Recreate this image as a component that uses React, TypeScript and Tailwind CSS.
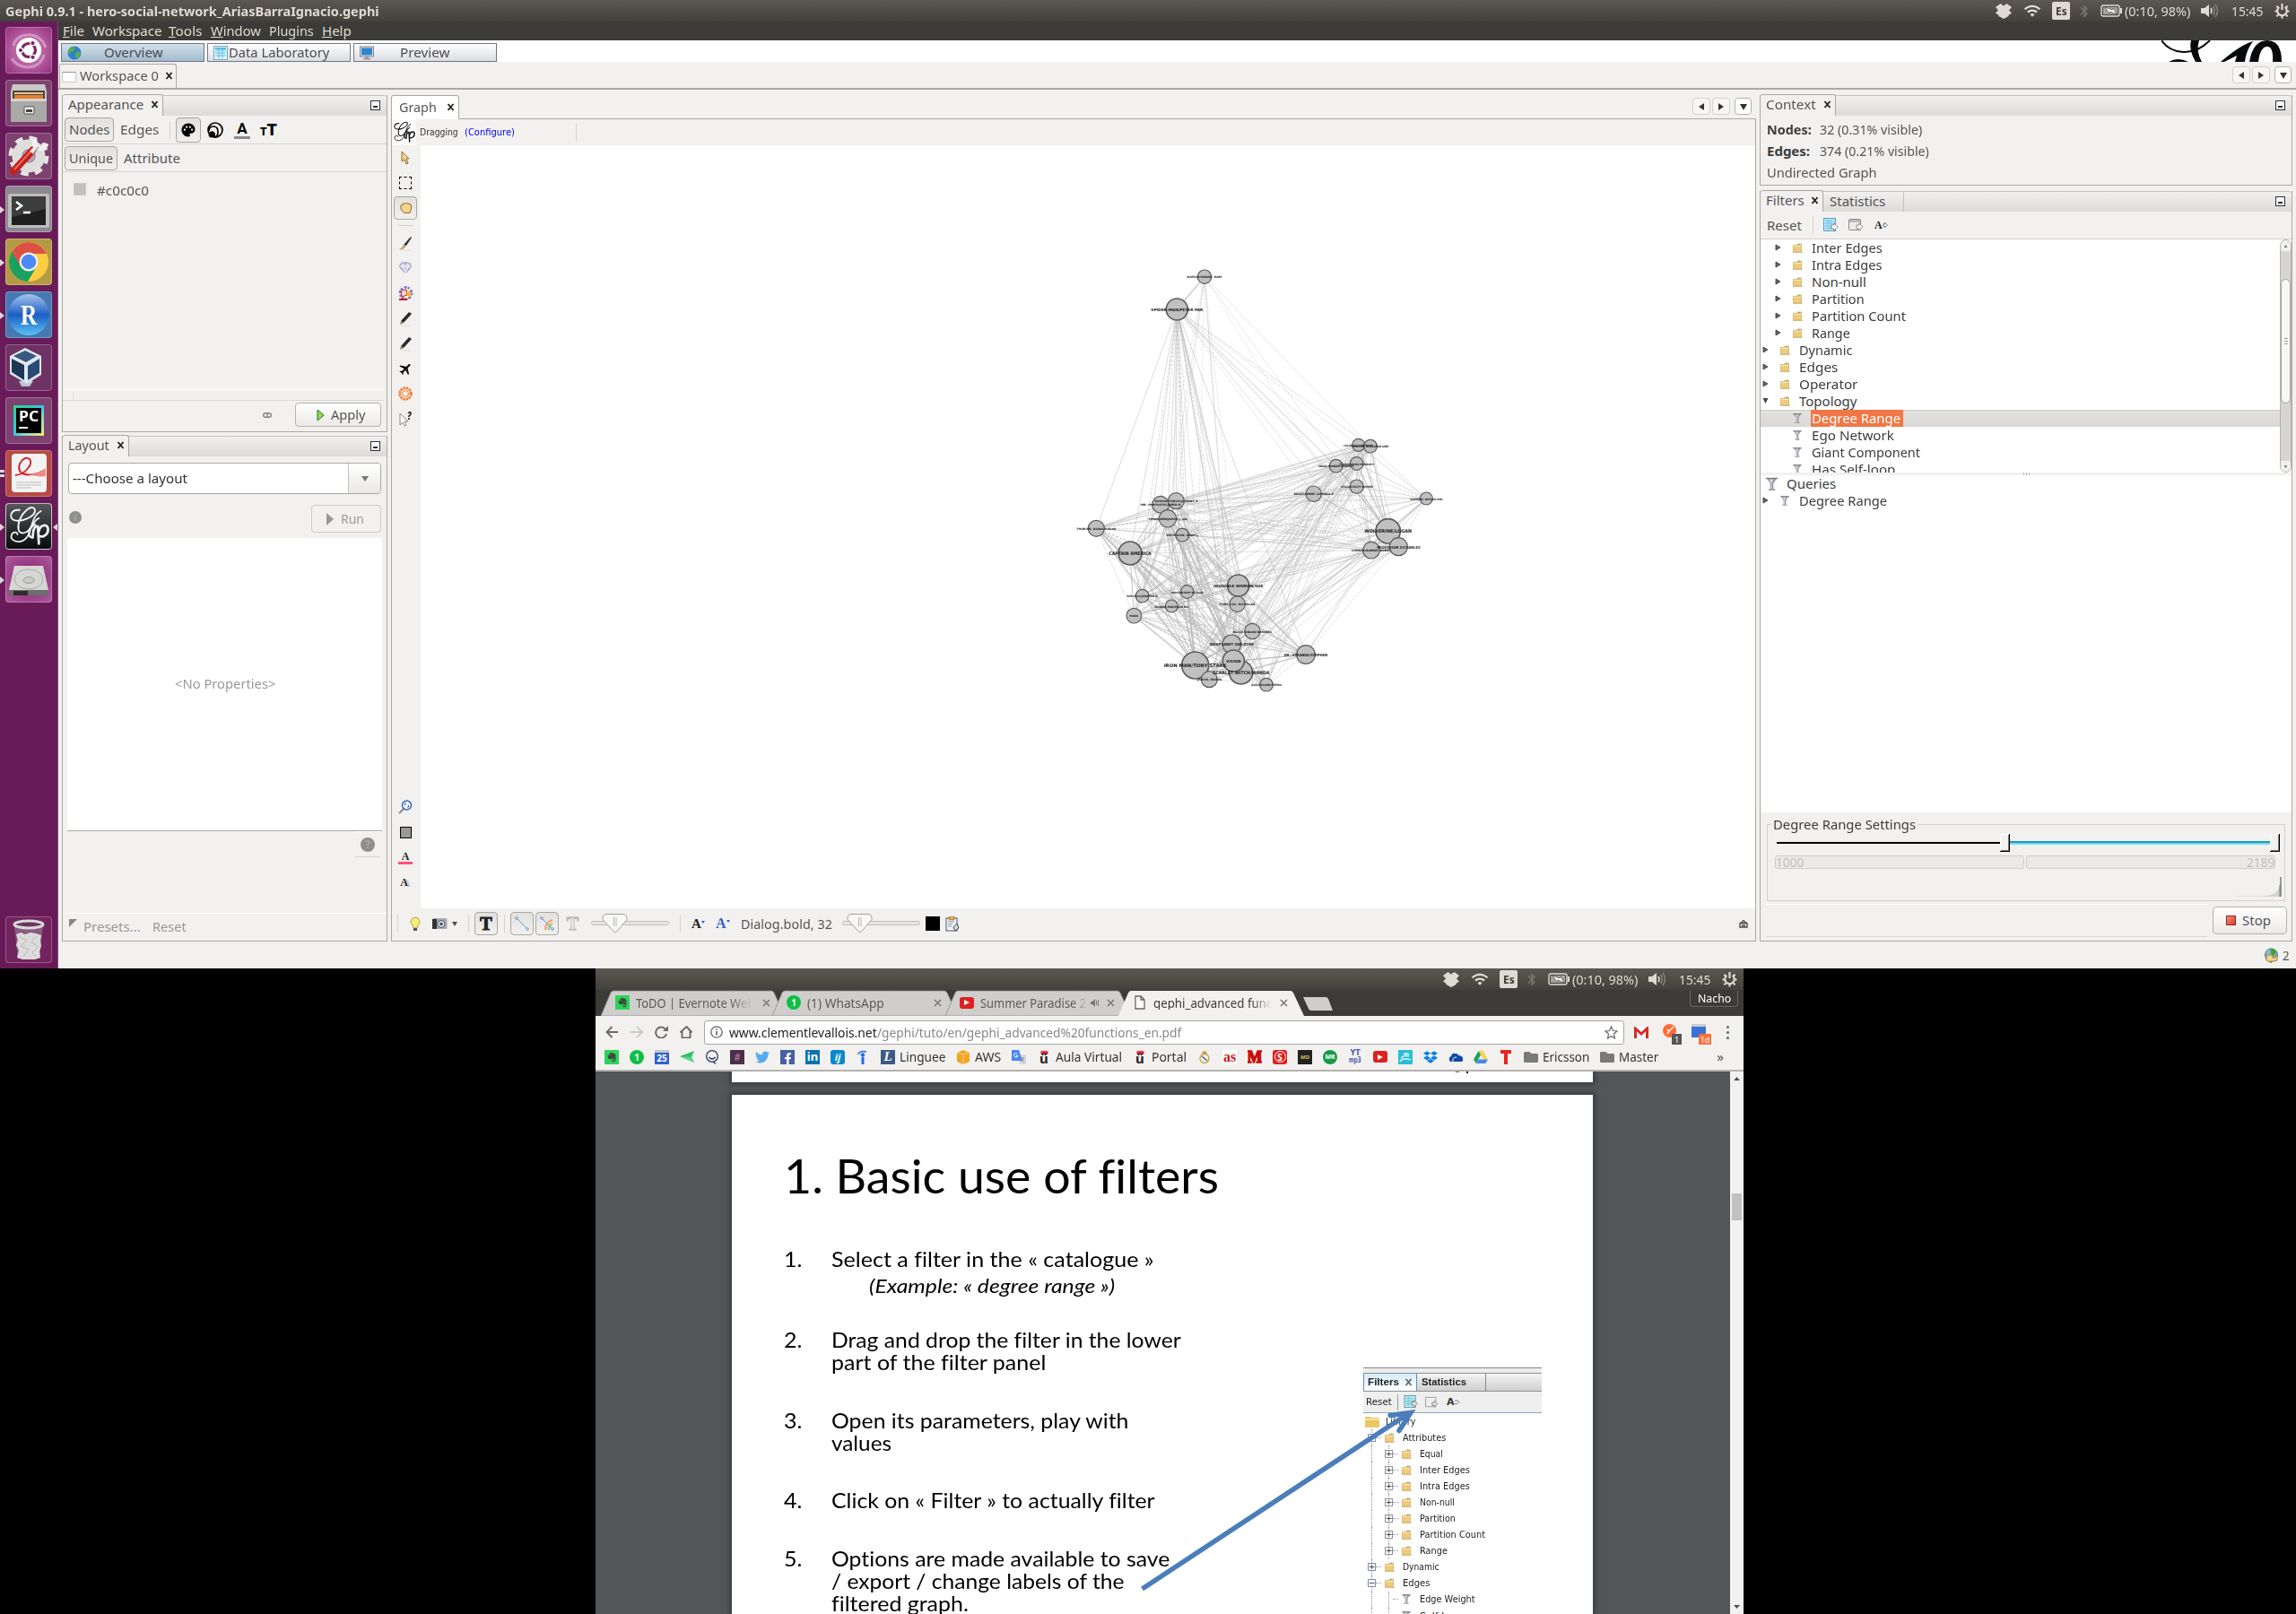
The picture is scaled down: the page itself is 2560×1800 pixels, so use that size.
import React, { useLayoutEffect, useRef, useState } from "react";
import { MdWifi, MdBluetooth, MdPalette, MdFlight } from "react-icons/md";
import { FaDropbox, FaTwitter, FaFacebookF, FaEvernote, FaFolder } from "react-icons/fa";

/* Text run condensed or stretched to a known advance width. */
function F({ w, children, className = "" }: { w: number; children: React.ReactNode; className?: string }) {
  const ref = useRef<HTMLSpanElement>(null);
  const [k, setK] = useState(1);
  useLayoutEffect(() => {
    if (ref.current) setK(w / ref.current.offsetWidth);
  }, [w]);
  return (
    <span className={"inline-block shrink-0 whitespace-pre " + className} style={{ width: w }}>
      <span ref={ref} className="inline-block origin-left whitespace-pre" style={{ transform: `scaleX(${k})` }}>
        {children}
      </span>
    </span>
  );
}

function PowerGear() {
  return (
    <svg className="h-[18px] w-[17px]" viewBox="0 0 17 18" fill="none" stroke="#dfdbd2">
      <path d="M5.300 4.800A5.300 5.300 0 1 0 11.700 4.800" strokeWidth="2.200" />
      <path d="M8.500 1V8" strokeWidth="2.200" />
      <path d="M2.300 3.800l1.800 1.700M14.700 3.800l-1.800 1.700M.5 9.500H3M14 9.500h2.500M2.300 15.200l1.900-1.800M14.700 15.200l-1.900-1.800M8.500 15v2.600" strokeWidth="2" />
    </svg>
  );
}

function Indicators() {
  return (
    <div className="flex h-6 items-center pr-[7px] text-[15px] text-[#dfdbd2]">
      <svg className="h-[18px] w-[18px]" viewBox="0 0 18 18" fill="#dfdbd2"><path d="M5.500 1L9 3.500 12.500 1 18 5l-3 3.500 3 3-3.500 2.500v1L9 18l-5.500-3v-1L0 11.500l3-3L0 5z" /></svg>
      <MdWifi className="ml-[13px] h-[20px] w-5" />
      <div className="ml-3 flex h-5 w-5 items-center justify-center rounded-[2px] bg-[#dfdbd2] text-[13px] font-bold text-[#3c3b37]">
        <F w={13}>Es</F>
      </div>
      <MdBluetooth className="ml-[8px] h-[17px] w-4 text-[#7b7973]" />
      <svg className="ml-[10px] h-[14px] w-6" viewBox="0 0 24 14">
        <rect x="1" y="1" width="20" height="12" rx="2" fill="none" stroke="#dfdbd2" strokeWidth="1.400" />
        <rect x="3" y="3" width="16" height="8" fill="#a5a29a" />
        <rect x="22" y="4" width="2" height="6" fill="#dfdbd2" />
        <path d="M5 3l8 3 1-2 4 7-7-3-1 2z" fill="#fff" stroke="#4a4944" strokeWidth=".7" />
      </svg>
      <F w={73} className="ml-[3px]">(0:10, 98%)</F>
      <svg className="ml-[12px] h-4 w-5" viewBox="0 0 20 16" fill="none">
        <path d="M0 5h4l5-4v14l-5-4H0z" fill="#dfdbd2" />
        <path d="M11 5q2 3 0 6" stroke="#dfdbd2" strokeWidth="1.600" />
        <path d="M13.500 3q3.500 5 0 10M16 1q5 7 0 14" stroke="#85827b" strokeWidth="1.500" />
      </svg>
      <F w={35} className="ml-[14px]">15:45</F>
      <div className="ml-[13px]"><PowerGear /></div>
    </div>
  );
}

function GephiMark({ color }: { color: string }) {
  return (
    <svg viewBox="0 0 44 44" className="h-full w-full" fill="none" stroke={color} strokeLinecap="round">
      <path d="M13 6C4 5 2 14 8 16c7 2 18-3 20-8 1-5-4-6-8-2-6 5-9 13-8 19 1 5 8 5 12-2 3-5 5-8 8-9" strokeWidth="1.700" />
      <path d="M34 7c-6 3-8 10-10 17-2 8-6 13-12 13-5 0-8-3-7-6 1-4 6-4 6-1" strokeWidth="1.500" />
      <path d="M25 33c-4-1-4-9 3-13" strokeWidth="2" />
      <path d="M26 33c0-8 2-12 5-11l1 17" strokeWidth="2.400" />
      <path d="M32 27c1-7 9-8 9-2 0 5-5 9-9 6" strokeWidth="2.400" />
    </svg>
  );
}

const tileBase = "relative flex h-[52px] w-[52px] items-center justify-center rounded-[4px] border border-white/25";
function Tile({ bg, children, left, right }: { bg: string; children: React.ReactNode; left?: number; right?: boolean }) {
  return (
    <div className={tileBase + " " + bg}>
      {left === 1 && <span className="absolute top-[22px] -left-[7px] h-0 w-0 border-y-[4px] border-l-[5px] border-y-transparent border-l-[#dcd6da]" />}
      {left === 2 && (
        <span className="absolute top-[21px] -left-[7px] flex flex-col gap-[2px]">
          <i className="block h-[3px] w-[5px] bg-[#dcd6da]" />
          <i className="block h-[3px] w-[5px] bg-[#dcd6da]" />
        </span>
      )}
      {right && <span className="absolute top-[22px] -right-[7px] h-0 w-0 border-y-[4px] border-r-[5px] border-y-transparent border-r-[#dcd6da]" />}
      {children}
    </div>
  );
}

function Launcher() {
  return (
    <div className="flex h-[1056px] w-[65px] shrink-0 flex-col border-r border-[#7d4a74] bg-[#681b58] pt-[6px] pl-[6px] pb-[6px]">
      <div className="flex flex-col gap-[7px]">
        <Tile bg="bg-radial from-[#d58cc4] to-[#96307f]">
          <svg viewBox="0 0 50 50" className="h-full w-full">
            <path d="M8 20C10 5 38 2 44 22M42 30C38 48 14 48 6 34" stroke="#fff" strokeOpacity=".35" strokeWidth="3" fill="none" />
            <circle cx="25" cy="25" r="14" fill="#fff" />
            <circle cx="25" cy="25" r="7.500" fill="none" stroke="#7a2367" strokeWidth="3.200" />
            <g fill="#7a2367" stroke="#fff" strokeWidth="1.200"><circle cx="16" cy="25" r="2.700" /><circle cx="29.500" cy="17.200" r="2.700" /><circle cx="29.500" cy="32.800" r="2.700" /></g>
          </svg>
        </Tile>
        <Tile bg="bg-[#7d4270]">
          <svg viewBox="0 0 50 50" className="h-full w-full">
            <path d="M7 4h36l2 8v33H5V12z" fill="#c9c9c7" />
            <rect x="7" y="11" width="36" height="9" fill="#4c4640" />
            <path d="M9 13h32v2H9z" fill="#e8c49b" /><path d="M9 16h32v4H9z" fill="#e57f2c" />
            <path d="M5 20h40v26H5z" fill="#a9a9a7" /><path d="M5 20h40v3H5z" fill="#d4d4d2" />
            <rect x="20" y="29" width="11" height="8" rx="1" fill="#efefef" stroke="#555" /><rect x="22" y="32" width="7" height="3" fill="#444" />
          </svg>
        </Tile>
        <Tile bg="bg-[#7d4270]">
          <svg viewBox="0 0 50 50" className="h-full w-full">
            <circle cx="25" cy="25" r="19.500" fill="none" stroke="#e4e4e2" strokeWidth="6" strokeDasharray="8.300 7" />
            <circle cx="25" cy="25" r="13" fill="none" stroke="#dededc" strokeWidth="11" />
            <circle cx="25" cy="25" r="7" fill="#b3a3b0" />
            <path d="M8 42L30 18" stroke="#c3201b" strokeWidth="8" strokeLinecap="round" />
            <path d="M9 40L28 19" stroke="#ee6a5e" strokeWidth="2" />
            <path d="M28 21L36 13M33 6q-5 7 2 10t10-5" stroke="#f0f0ee" strokeWidth="5" fill="none" />
            <path d="M30 22L36 15" stroke="#aaa" strokeWidth="1.500" />
          </svg>
        </Tile>
        <Tile bg="bg-[#8e8791]" left={1}>
          <svg viewBox="0 0 50 50" className="h-full w-full">
            <rect x="2" y="8" width="46" height="38" rx="2" fill="#bdbdbb" /><rect x="6" y="11" width="38" height="32" fill="#1f1f1f" />
            <path d="M6 11h38v14L6 34z" fill="#3d3d3d" />
            <path d="M11 17l6 4.500-6 4.500M19 29h8" stroke="#fff" strokeWidth="2.400" fill="none" />
          </svg>
        </Tile>
        <Tile bg="bg-[#b59a45]" left={1}>
          <svg viewBox="0 0 50 50" className="h-full w-full">
            <circle cx="25" cy="25" r="22" fill="#ffcd40" />
            <path d="M25 25L6 14A22 22 0 0 0 24 47l10-17z" fill="#1aa15f" />
            <path d="M25 16h20A22 22 0 0 0 6 14l10 16z" fill="#dd5144" />
            <circle cx="25" cy="25" r="10.500" fill="#f2f2f2" /><circle cx="25" cy="25" r="8.300" fill="#4c8bf5" />
          </svg>
        </Tile>
        <Tile bg="bg-[#4679b4]" left={1}>
          <div className="flex h-[46px] w-[46px] items-center justify-center rounded-full bg-linear-to-b from-[#a5c3ec] via-[#1d5ec4] to-[#5ec2f5] font-['Liberation_Serif'] text-[31px] font-bold text-white"><F w={18}>R</F></div>
        </Tile>
        <Tile bg="bg-[#6f3264]">
          <svg viewBox="0 0 50 50" className="h-full w-full">
            <path d="M14 40h16l-4 6h-9z" fill="#b9c6d6" />
            <path d="M21 3l18 9v21L23 43 4 32V12z" fill="#dfe7f0" />
            <path d="M21 6l13 6-12 7-14-7z" fill="#37587f" /><path d="M6 15l14 7v17L6 30z" fill="#1c3658" /><path d="M37 15L24 23v16l13-8z" fill="#284a74" />
          </svg>
        </Tile>
        <Tile bg="bg-[#7d4270]">
          <div className="flex h-[34px] w-[34px] items-center justify-center bg-linear-to-br from-[#2bd38c] via-[#35c6e0] to-[#f6f04b]">
            <div className="flex h-[28px] w-[28px] flex-col bg-black px-[3px] font-['Noto_Sans'] text-[16px] leading-[18px] font-bold text-white">
              <F w={22}>PC</F>
              <i className="mt-[3px] block h-[2px] w-[10px] bg-white" />
            </div>
          </div>
        </Tile>
        <Tile bg="bg-[#b84a45]" left={2}>
          <svg viewBox="0 0 50 50" className="h-full w-full">
            <rect x="6" y="3" width="39" height="43" rx="4" fill="#f3f3f3" />
            <path d="M10 27C22 26 30 14 26 9 20 4 12 15 15 22c3 6 18 6 28-1" fill="none" stroke="#d8262a" strokeWidth="2" />
            <path d="M22 25c8 2 16-1 22-6v9c-6 1-14 0-22-3z" fill="#f08a85" />
            <path d="M11 35h28M11 38h28M11 41h17" stroke="#bbb" />
          </svg>
        </Tile>
        <Tile bg="bg-linear-to-b from-[#56585c] to-[#0a0b0c] border-white/70" left={1} right><GephiMark color="#f2f2f2" /></Tile>
        <Tile bg="bg-radial from-[#85126f] to-[#ab5a9c]" left={1}>
          <svg viewBox="0 0 50 50" className="h-full w-full">
            <path d="M9 10h32l6 27H3z" fill="#d6d6d4" /><path d="M3 37h44v6H3z" fill="#6d6d6b" /><path d="M8 38h16v5H8z" fill="#2d2d2d" />
            <ellipse cx="25" cy="25" rx="16" ry="11" fill="none" stroke="#aaa" /><ellipse cx="25" cy="26" rx="6" ry="3.500" fill="#c9c9c7" stroke="#999" />
          </svg>
        </Tile>
      </div>
      <div className="mt-auto">
        <Tile bg="bg-[#72245f]">
          <svg viewBox="0 0 50 50" className="h-full w-full">
            <path d="M9 9h32l-4 37H13z" fill="#8a5a80" />
            <path d="M11 19l5-2 5 2 6-2 6 1 6 2-1 6 1 6-2 6 1 7-6 2H18l-6-2 2-8-3-6 2-6z" fill="#dcdcda" />
            <path d="M15 22l8 4-7 6 9 4-6 8M34 21l-6 7 8 5-7 6 4 5" stroke="#b9b9b7" fill="none" />
            <ellipse cx="25" cy="8" rx="16" ry="4" fill="#6a3560" stroke="#d9d9d7" strokeWidth="3" />
          </svg>
        </Tile>
      </div>
    </div>
  );
}

const X = ({ className = "" }: { className?: string }) => (
  <svg className={"h-[9px] w-[9px] shrink-0 " + className} viewBox="0 0 9 9"><path d="M1.500 1l6 7M7.500 1l-6 7" stroke="currentColor" strokeWidth="1.900" /></svg>
);
const MinBox = () => (
  <div className="mr-[7px] ml-auto flex h-[11px] w-[11px] items-end border border-[#2c2f3c] bg-white p-[2px]"><i className="block h-[2px] w-[5px] bg-[#2c2f3c]" /></div>
);
function Header({ children }: { children: React.ReactNode }) {
  return (
    <div className="flex h-[23px] shrink-0 items-center rounded-t-[3px] border-t border-[#c4c2bd] bg-linear-to-b from-[#f1f0ee] to-[#dcdbd8] pb-[2px]">{children}</div>
  );
}
const Tab = ({ w, tw, children }: { w: string; tw: number; children: string }) => (
  <div className={"-my-[2px] flex h-[24px] items-center justify-between rounded-t-[3px] border-t border-r border-[#aca9a2] bg-[#f2f1ef] pr-[4px] pb-[2px] pl-[6px] " + w}>
    <F w={tw}>{children}</F><X className="text-[#222]" />
  </div>
);
const sq = "flex items-center justify-center rounded-[4px] border border-[#aaa7a0] bg-linear-to-b from-[#e2e1de] to-[#f1f0ee]";
const btn = "flex items-center rounded-[4px] border border-[#b5b2ac] bg-linear-to-b from-white to-[#ebeae8]";
const V = ({ className = "" }: { className?: string }) => <i className={"block h-5 w-px shrink-0 bg-[#d6d4d0] " + className} />;

function ArrowBtns() {
  return (
    <div className="flex items-center gap-[2px]">
      {["M8 1v8L2 5z", "M2 1v8l6-4z"].map((d) => (
        <div key={d} className="flex h-[19px] w-[20px] items-center justify-center rounded-[4px] border border-[#d3d1cd] bg-[#f8f7f6]">
          <svg className="h-[10px] w-[10px]" viewBox="0 0 10 10"><path d={d} fill="#333" /></svg>
        </div>
      ))}
      <div className="ml-[3px] flex h-[19px] w-[19px] items-center justify-center rounded-[4px] border border-[#b5b2ac] bg-white">
        <svg className="h-[10px] w-[10px]" viewBox="0 0 10 10"><path d="M1 2h8L5 9z" fill="#333" /></svg>
      </div>
    </div>
  );
}

function AppearancePanel() {
  return (
    <div className="flex h-[376px] w-[363px] flex-col border border-t-0 border-[#aca9a2]">
      <Header><Tab w="w-[112px]" tw={84}>Appearance</Tab><MinBox /></Header>
      <div className="flex h-8 shrink-0 items-center border-b border-[#d9d7d3] pl-[2px]">
        <div className={sq + " h-[27px] w-[55px]"}><F w={45}>Nodes</F></div>
        <F w={43} className="ml-[7px]">Edges</F>
        <V className="ml-[12px]" />
        <div className={sq + " ml-[6px] h-[28px] w-[28px]"}><MdPalette className="h-[18px] w-[18px] text-black" /></div>
        <svg className="ml-[7px] h-[20px] w-[18px]" viewBox="0 0 18 20" fill="none" stroke="#000">
          <circle cx="9" cy="10" r="8" strokeWidth="1.700" /><path d="M2 11q0-5 5-5t5 6-4 6M3 13q4-2 5 1t-2 4" strokeWidth="1.700" /><circle cx="4.500" cy="15.500" r="2.500" fill="#000" />
        </svg>
        <div className="ml-[12px] flex w-[18px] flex-col items-center border-b-[3px] border-[#8b8b8b] font-['Roboto'] text-[17px] leading-[17px] font-bold text-black">A</div>
        <div className="ml-[11px] font-['Roboto'] font-black text-black"><span className="text-[12px]">T</span><span className="text-[18px]">T</span></div>
      </div>
      <div className="flex h-[31px] shrink-0 items-center border-b border-[#d9d7d3] pl-[2px]">
        <div className={sq + " h-[27px] w-[59px]"}><F w={49}>Unique</F></div>
        <F w={63} className="ml-[7px]">Attribute</F>
      </div>
      <div className="flex h-[242px] gap-3 pt-[10px] pl-[12px]">
        <i className="mt-[2px] block h-[14px] w-[14px] border border-[#ccc] bg-[#c0c0c0]" />
        <F w={58} className="h-5 leading-5">#c0c0c0</F>
      </div>
      <div className="mr-[3px] h-[13px] border-t border-b border-t-white border-b-[#d9d7d3] pl-[11px]"><i className="mt-[2px] block h-[9px] w-px bg-[#ddd]" /></div>
      <div className="flex grow items-center pr-[6px] pb-[3px]">
        <svg className="ml-auto h-[8px] w-[10px]" viewBox="0 0 10 8"><rect x="0" y="1" width="10" height="6" rx="3" fill="#888" /><rect x="1.500" y="2.500" width="3" height="3" rx="1.500" fill="#f2f1ef" /><rect x="5.500" y="2.500" width="3" height="3" rx="1.500" fill="#f2f1ef" /></svg>
        <div className={btn + " ml-[26px] h-[27px] w-[96px] pl-[23px]"}>
          <svg className="h-[14px] w-[9px]" viewBox="0 0 9 14"><path d="M1 1v12l7-6z" fill="#8fdc5c" stroke="#2d6e17" /></svg>
          <F w={39} className="ml-[7px]">Apply</F>
        </div>
      </div>
    </div>
  );
}

function LayoutPanel() {
  return (
    <div className="mt-[4px] flex h-[564px] w-[363px] flex-col border border-t-0 border-[#aca9a2]">
      <Header><Tab w="w-[74px]" tw={46}>Layout</Tab><MinBox /></Header>
      <div className="mx-[6px] mt-[7px] flex h-[35px] shrink-0 rounded-[4px] border border-[#aca9a2] bg-white">
        <F w={128} className="ml-[4px] leading-[33px] text-[#333]">---Choose a layout</F>
        <div className="ml-auto flex w-[36px] items-center justify-center rounded-r-[4px] border-l border-[#c4c2bd] bg-linear-to-b from-white to-[#e9e8e6]">
          <svg className="h-[6px] w-[8px]" viewBox="0 0 8 6"><path d="M0 0h8L4 6z" fill="#777" /></svg>
        </div>
      </div>
      <div className="mx-[6px] mt-[12px] flex h-[31px] shrink-0 items-center justify-between">
        <div className="mb-1 ml-px flex h-[14px] w-[14px] items-center justify-center rounded-full bg-[#8f8f8f] text-[11px] font-bold text-[#a9a9a9]">i</div>
        <div className="flex h-[31px] w-[78px] items-center rounded-[4px] border border-[#cfcdc9] pl-[16px] text-[#999]">
          <svg className="h-[14px] w-[9px]" viewBox="0 0 9 14"><path d="M0 0v14l8-7z" fill="#999" /></svg>
          <F w={26} className="ml-[7px]">Run</F>
        </div>
      </div>
      <div className="mx-[5px] mt-[6px] flex h-[327px] shrink-0 items-center justify-center border-b border-[#aca9a2] bg-white pb-[2px] text-[#999]"><F w={112}>{"<No Properties>"}</F></div>
      <div className="mr-[7px] ml-auto flex h-[29px] w-[28px] items-center justify-center border-t border-b border-t-white border-b-[#d9d7d3]">
        <div className="flex h-[16px] w-[16px] items-center justify-center rounded-full bg-[#8f8f8f] text-[12px] font-bold text-[#a9a9a9]">?</div>
      </div>
      <div className="mt-auto flex h-[31px] items-center border-t border-white pb-[2px] pl-[7px] text-[#999]">
        <svg className="-mt-2 h-[9px] w-[9px]" viewBox="0 0 9 9"><path d="M0 0h9L0 9z" fill="#888" /></svg>
        <F w={64} className="ml-[7px]">Presets...</F>
        <F w={38} className="ml-[13px]">Reset</F>
      </div>
    </div>
  );
}

/* x, y, radius, label, label width, in a 1440 x 1560 drawing space */
const nodes: [number, number, number, string, number][] = [
  [549, 116, 24, "WATSON-PARKER, MARY ", 118],
  [457, 225, 37, "SPIDER-MAN/PETER PAR", 174],
  [187, 958, 28, "THOR/DR. DONALD BLAK", 132],
  [300, 1041, 40, "CAPTAIN AMERICA", 142],
  [402, 878, 29, "MR. FANTASTIC/REED R", 134],
  [454, 866, 28, "HUMAN TORCH/JOHNNY S", 144],
  [426, 925, 30, "THING/BENJAMIN J. GR", 130],
  [475, 980, 23, "ANT-MAN/DR. HENRY J.", 108],
  [659, 1211, 27, "FURY, COL. NICHOLAS ", 118],
  [662, 1149, 37, "INVISIBLE WOMAN/SUE ", 166],
  [491, 1170, 23, "FALCON/SAM WILSON", 106],
  [341, 1184, 23, "SHE-HULK/JENNIFER W", 104],
  [439, 1218, 22, "WONDER MAN/SIMON WIL", 114],
  [313, 1250, 26, "HAWK", 30],
  [709, 1302, 27, "BLACK WIDOW/NATASHA ", 130],
  [640, 1345, 32, "WASP/JANET VAN DYNE ", 148],
  [671, 1440, 40, "SCARLET WITCH/WANDA ", 190],
  [646, 1401, 37, "VISION ", 50],
  [518, 1416, 46, "IRON MAN/TONY STARK ", 210],
  [565, 1463, 28, "JARVIS, EDWIN ", 82],
  [756, 1481, 23, "QUICKSILVER/PIETRO", 102],
  [888, 1380, 32, "DR. STRANGE/STEPHEN ", 145],
  [914, 842, 27, "BEAST/HENRY &HANK& P", 133],
  [989, 749, 23, "ANGEL/WARREN KENNETH", 118],
  [1058, 741, 23, "STORM/ORORO MUNROE S", 116],
  [1064, 679, 22, "COLOSSUS II/PETER RA", 100],
  [1104, 683, 23, "MARVEL GIRL/JEAN GRE", 120],
  [1058, 818, 24, "CYCLOPS/SCOTT SUMMER", 108],
  [1291, 858, 22, "SUMMERS, NATHAN CHRI", 108],
  [1163, 967, 42, "WOLVERINE/LOGAN ", 158],
  [1198, 1019, 31, "PROFESSOR X/CHARLES ", 145],
  [1107, 1031, 29, "ICEMAN/ROBERT BOBBY ", 132],
];

const edges: [number, number, number][] = [];
for (let a = 0; a < nodes.length; a++) {
  for (let b = a + 1; b < nodes.length; b++) {
    const h = (a * 73 + b * 151 + a * b * 7) % 100;
    if (a === 0) {
      if ([1, 4, 5, 6, 9, 15, 17, 18, 26, 29, 31].includes(b)) edges.push([a, b, b === 1 ? 3.5 : 1.2]);
      continue;
    }
    if (b === 28 && a < 22 && h > 35) continue;
    const cross = a < 22 && b >= 22;
    if (cross && a !== 1 && h > 76) continue;
    if (!cross && a > 1 && h > 94) continue;
    const hub = nodes[a][2] + nodes[b][2] > 62 && !cross && a > 1;
    edges.push([a, b, hub ? 3.2 : cross ? 1.6 : 1.9]);
  }
}

function Graph() {
  return (
    <svg className="mt-[108px] ml-[691px] h-[520px] w-[480px]" viewBox="0 0 1440 1560">
      {edges.map(([a, b, w], i) => (
        <line key={i} x1={nodes[a][0]} y1={nodes[a][1]} x2={nodes[b][0]} y2={nodes[b][1]} stroke="#b8b8b8" strokeOpacity=".8" strokeWidth={w} strokeDasharray={i % 3 === 1 ? "10 4" : undefined} />
      ))}
      {nodes.map(([x, y, r], i) => (
        <circle key={i} cx={x} cy={y} r={r - 1} fill="#c0c0c0" stroke="#5c5c5c" strokeWidth={r > 34 ? 5 : 3.5} />
      ))}
      {nodes.map(([x, y, r, t, w], i) => (
        <text key={i} x={x - w / 2} y={y + 4 + r / 20} textLength={w} lengthAdjust="spacingAndGlyphs" className="font-['DejaVu_Sans'] font-bold" fontSize={r > 39 ? 15 : r > 30 ? 12.5 : 9.5} fill="#1c1c1c">{t.trim()}</text>
      ))}
    </svg>
  );
}

function Brush() {
  return <svg className="h-[17px] w-[16px]" viewBox="0 0 16 17"><path d="M2 16h12" stroke="#ddd" /><path d="M14 1l1 1-6 9-3-1z" fill="#333" /><path d="M6 10l3 1q-2 5-8 4 3-1 5-5z" fill="#b6a77e" /></svg>;
}
function Pencil() {
  return <svg className="h-[17px] w-[16px]" viewBox="0 0 16 17"><path d="M3 16h11" stroke="#ddd" /><path d="M12 1l3 2-9 10-3-2z" fill="#2b2b2b" /><path d="M3 11l3 2-4 2z" fill="#8a7a50" /></svg>;
}
const cell = "flex h-[28px] w-[30px] items-center justify-center";

function GraphPanel() {
  return (
    <div className="ml-[4px] flex h-[944px] w-[1522px] flex-col">
      <div className="flex h-[27px] shrink-0 items-center border-b border-[#aca9a2] pr-[5px] pb-px">
        <div className="-mb-[2px] flex h-[27px] w-[76px] items-center justify-between rounded-t-[3px] border border-b-0 border-[#aca9a2] bg-white pr-[4px] pb-px pl-[8px]"><F w={42}>Graph</F><X className="text-[#222]" /></div>
        <div className="ml-auto"><ArrowBtns /></div>
      </div>
      <div className="flex grow flex-col border border-t-0 border-[#aca9a2]">
        <div className="flex h-[29px] shrink-0 items-center text-[11px]">
          <div className="h-[29px] w-[27px] bg-white"><GephiMark color="#111" /></div>
          <F w={43} className="ml-[4px] font-['DejaVu_Sans'] text-[#333]">Dragging</F>
          <F w={56} className="ml-[7px] font-['DejaVu_Sans'] text-[#0000f0]">(Configure)</F>
          <V className="ml-[68px]" />
        </div>
        <div className="flex h-[851px] shrink-0">
          <div className="flex w-[32px] flex-col">
            <div className={cell}><svg className="h-[16px] w-[10px]" viewBox="0 0 10 16"><path d="M1 1v11l3-2 2 5 2-1-2-5h3z" fill="#f6d28a" stroke="#8a6b34" /></svg></div>
            <div className={cell}><i className="block h-[14px] w-[14px] border border-dashed border-black" /></div>
            <div className={cell}><div className={sq + " h-[26px] w-[26px]"}><svg className="h-[14px] w-[15px]" viewBox="0 0 15 14"><path d="M2 6Q1 4 2.500 3.500L4 4V2.500Q5 1 6 2.500 7 .5 8.500 2 10 .8 11 2.500 13.500 2 13.500 5v3l-1.500 4.500H6Q3.500 11 2 8z" fill="#f5d58c" stroke="#8d6a2c" /></svg></div></div>
            <div className="flex h-[11px] w-[30px] items-center justify-center"><i className="block h-px w-[16px] bg-[#cfcdc9]" /></div>
            <div className={cell}><Brush /></div>
            <div className={cell}><svg className="h-[14px] w-[16px]" viewBox="0 0 16 14"><path d="M4 1h8l3 4-7 8-7-8z" fill="#c9cbe4" stroke="#8486a8" /><path d="M1 5h14M5 5l3 8 3-8M5 1v4M11 1v4" stroke="#fff" fill="none" strokeWidth=".8" /></svg></div>
            <div className={cell}><svg className="h-[17px] w-[17px]" viewBox="0 0 17 17"><circle cx="8.500" cy="8" r="6.500" fill="none" stroke="#3f7fe0" strokeWidth="2.500" strokeDasharray="2 2" /><circle cx="8.500" cy="8" r="6.500" fill="none" stroke="#d04fb0" strokeWidth="2.500" strokeDasharray="2 6" strokeDashoffset="3" /><path d="M3 5l6-1 1 6-6 2z" fill="#e8ddd0" stroke="#c22" /><path d="M9 8l3-3 3 5-3 3z" fill="#f3b52a" /><path d="M1 15h9" stroke="#c11" strokeWidth="2" /></svg></div>
            <div className={cell}><Pencil /></div>
            <div className={cell}><Pencil /></div>
            <div className={cell}><MdFlight className="h-[17px] w-[17px] rotate-45 text-black" /></div>
            <div className={cell}><svg className="h-[16px] w-[16px]" viewBox="0 0 16 16" fill="none" stroke="#f37a2b"><circle cx="8" cy="8" r="6.300" strokeWidth="2.800" strokeDasharray="2.400 .9" /><circle cx="8" cy="8" r="3.300" strokeWidth="1.300" strokeDasharray="1.500 .6" /></svg></div>
            <div className={cell}><svg className="h-[18px] w-[15px]" viewBox="0 0 15 18"><path d="M1 3v13l3-3 2 4 2-1-2-4h4z" fill="#fff" stroke="#888" /><path d="M10 3q3-3 3 0 0 2-2 3v1M11 8v2" stroke="#222" strokeWidth="1.600" fill="none" /></svg></div>
            <div className={cell + " mt-[405px]"}><svg className="h-[16px] w-[16px]" viewBox="0 0 16 16" fill="none"><path d="M1 15l6-6" stroke="#888" strokeWidth="2" /><circle cx="9.500" cy="6" r="5" fill="#eef4ff" stroke="#3f5fb5" strokeWidth="1.500" /><path d="M7.500 6V4h1.500M11.500 6v2H10" stroke="#2a5fd0" /></svg></div>
            <div className={cell}><i className="block h-[13px] w-[13px] border border-black bg-[#999]" /></div>
            <div className={cell}><div className="flex h-[15px] w-[16px] justify-center border-b-[3px] border-[#ff4f7b] font-['Liberation_Serif'] text-[12px] leading-[12px] font-bold text-[#222]">A</div></div>
            <div className={cell}><span className="mr-[3px] font-['Liberation_Serif'] text-[12px] font-bold text-[#222] [text-shadow:3px_1px_0_#ccc]">A</span></div>
          </div>
          <div className="grow bg-white"><Graph /></div>
        </div>
        <div className="flex grow items-center pb-[2px]">
          <V className="ml-[6px]" />
          <svg className="ml-[13px] h-[17px] w-[12px]" viewBox="0 0 12 17"><path d="M6 1a5 5 0 0 1 3 9l-1 3H4l-1-3a5 5 0 0 1 3-9z" fill="#eef07a" stroke="#c79a4e" /><path d="M4 13h4v3H4z" fill="#555" /></svg>
          <svg className="ml-[13px] h-[14px] w-[17px]" viewBox="0 0 17 14"><rect x=".5" y="1" width="16" height="12" rx="1" fill="#a8aab4" /><rect x="0" y="2" width="5" height="11" fill="#333" /><circle cx="10" cy="7.500" r="4" fill="#dfe3ee" stroke="#555" /><circle cx="10" cy="7.500" r="1.800" fill="#3a4a78" /></svg>
          <svg className="ml-[5px] h-[5px] w-[6px]" viewBox="0 0 6 5"><path d="M0 0h6L3 5z" fill="#444d5e" /></svg>
          <V className="ml-[12px]" />
          <div className={sq + " ml-[6px] h-[26px] w-[26px] font-['Liberation_Serif'] text-[20px] font-bold text-[#222] [-webkit-text-stroke:1px_#222]"}>T</div>
          <V className="ml-[7px]" />
          <div className={sq + " ml-[6px] h-[26px] w-[26px]"}><svg className="h-[16px] w-[16px]" viewBox="0 0 16 16" fill="none" stroke="#6b9fd0"><path d="M3 3l10 10" /><circle cx="2" cy="2" r="1.300" /><circle cx="14" cy="14" r="1.300" /></svg></div>
          <div className={sq + " ml-[2px] h-[26px] w-[26px]"}><svg className="h-[16px] w-[16px]" viewBox="0 0 16 16" fill="none"><path d="M6 15Q6 6 14 4" stroke="#f3a08c" strokeWidth="2" /><path d="M8 15q0-7 6-8" stroke="#e8d97c" strokeWidth="2" /><path d="M10 15q0-5 4-6" stroke="#93c99a" strokeWidth="2" /><path d="M3 3l10 10" stroke="#6b9fd0" /><circle cx="2" cy="2" r="1.300" stroke="#6b9fd0" /><circle cx="14" cy="14" r="1.300" stroke="#6b9fd0" /></svg></div>
          <div className="ml-[8px] flex w-[15px] justify-center font-['Liberation_Serif'] text-[20px] font-bold text-[#f7f7f7] [-webkit-text-stroke:1px_#b5b5b5]">T</div>
          <div className="ml-[13px]"><Slider /></div>
          <V className="ml-[12px]" />
          <div className="ml-[12px] flex w-[15px] font-['Liberation_Serif'] text-[15px] font-bold text-[#222]">A<span className="text-[9px] text-[#3a5fc8]"><svg className="mt-1 h-[3px] w-[4px]" viewBox="0 0 4 3"><path d="M0 0h4L2 3z" fill="#3a5fc8" /></svg></span></div>
          <div className="ml-[12px] flex w-[16px] font-['Liberation_Serif'] text-[16px] font-bold text-[#3a5fc8]">A<svg className="mt-1 h-[3px] w-[4px]" viewBox="0 0 4 3"><path d="M0 0h4L2 3z" fill="#3a5fc8" /></svg></div>
          <F w={102} className="ml-[12px]">Dialog.bold, 32</F>
          <div className="ml-[11px]"><Slider short /></div>
          <i className="ml-[6px] block h-[16px] w-[16px] bg-black" />
          <svg className="ml-[6px] h-[17px] w-[16px]" viewBox="0 0 16 17" fill="none"><rect x="1" y="2" width="12" height="14" fill="#f3f6fa" stroke="#44546c" /><rect x="4" y="0" width="6" height="4" fill="#e2a64b" stroke="#946a22" strokeWidth=".6" /><path d="M3 6h7M3 8.500h5M3 11h4" stroke="#7d90b0" /><path d="M9 12l4-4 2 5-4 3z" fill="#ddd" stroke="#444" /></svg>
          <svg className="mr-[8px] ml-auto h-[10px] w-[10px]" viewBox="0 0 10 10" fill="none" stroke="#444"><path d="M5 1L1.500 4.500h7z" fill="#999" /><path d="M1 4.500h8v4.500H1zM3 7h4" strokeWidth="1.300" /></svg>
        </div>
      </div>
    </div>
  );
}

function Slider({ short }: { short?: boolean }) {
  return (
    <svg className="h-[24px] w-[87px]" viewBox="0 0 87 24" fill="none">
      <rect x=".5" y="9.500" width="86" height="4" rx="2" fill="#e6e5e2" stroke="#c2c0bb" />
      <g transform={short ? "translate(-7 0)" : undefined}>
        <path d="M16 1.500h21q3 1 3 4v2L28.500 21Q27 22.500 25.500 21L13 7.500v-2q0-3 3-4z" fill="#f8f8f7" stroke="#a3a19b" />
        <path d="M25.500 5v10M28 5v10" stroke="#b7b5b0" />
      </g>
    </svg>
  );
}

const Funnel = ({ className = "h-[11px] w-[10px]" }: { className?: string }) => (
  <svg className={"shrink-0 " + className} viewBox="0 0 14 16"><path d="M1 1h12L9 7v7h2v1.500H3V14h2V7z" fill="#9a9aa2" /><path d="M4 2h5L7 6v8H6V6z" fill="#dddde6" /><path d="M0 1h14" stroke="#77777f" strokeWidth="1.500" /></svg>
);
const Folder = () => (
  <svg className="h-[11px] w-[11px] shrink-0" viewBox="0 0 11 11"><path d="M.5 2.500H5V1h4.500v9h-9z" fill="#efcb7c" stroke="#cfa95c" strokeWidth=".7" /><path d="M1 3.500h8" stroke="#fbeab8" /><path d="M0 10.500h11" stroke="#c9b27d" strokeWidth=".8" /><path d="M6 1.200h2v1H6z" fill="#5fa8d8" /></svg>
);

type Row = { t: string; w: number; lvl: number; kind?: "open" | "leaf"; sel?: boolean };
const library: Row[] = [
  { t: "Inter Edges", w: 79, lvl: 1 }, { t: "Intra Edges", w: 78, lvl: 1 }, { t: "Non-null", w: 61, lvl: 1 }, { t: "Partition", w: 59, lvl: 1 },
  { t: "Partition Count", w: 105, lvl: 1 }, { t: "Range", w: 43, lvl: 1 }, { t: "Dynamic", w: 59, lvl: 0 }, { t: "Edges", w: 43, lvl: 0 },
  { t: "Operator", w: 65, lvl: 0 }, { t: "Topology", w: 65, lvl: 0, kind: "open" }, { t: "Degree Range", w: 99, lvl: 1, kind: "leaf", sel: true },
  { t: "Ego Network", w: 92, lvl: 1, kind: "leaf" }, { t: "Giant Component", w: 121, lvl: 1, kind: "leaf" }, { t: "Has Self-loop", w: 93, lvl: 1, kind: "leaf" },
];

function FilterRow({ r, funnel }: { r: Row; funnel?: boolean }) {
  return (
    <div className={"flex h-[19px] shrink-0 items-center text-[#3c3c3c] " + (r.lvl ? "pl-[15px] " : "pl-px ") + (r.sel ? "bg-linear-to-b from-[#e3e2e0] to-[#d9d8d5] shadow-[inset_0_1px_0_#cfcdca]" : "")}>
      <svg className="-mt-px h-[8px] w-[9px] shrink-0" viewBox="0 0 9 8">
        {r.kind === "open" ? <path d="M1.500 1h6L4.500 7z" fill="#444" /> : r.kind === "leaf" ? null : <path d="M2 1v6L7 4z" fill="#666" stroke="#333" strokeWidth=".8" />}
      </svg>
      <span className="ml-[12px] flex w-[20px] items-center">{r.kind === "leaf" || funnel ? <Funnel /> : <Folder />}</span>
      <div className={r.sel ? "flex h-[19px] items-center bg-[#f07746] pr-[3px] pl-px text-white" : "pl-px"}><F w={r.w}>{r.t}</F></div>
    </div>
  );
}

function RightColumn() {
  return (
    <div className="ml-[4px] flex w-[594px] flex-col">
      <div className="flex h-[101px] shrink-0 flex-col border border-t-0 border-[#aca9a2]">
        <Header><Tab w="w-[84px]" tw={56}>Context</Tab><MinBox /></Header>
        <div className="flex flex-col pt-[3px] pl-[7px]">
          <div className="flex h-6 items-center"><F w={50} className="font-bold text-[#3c3c3c]">Nodes:</F><F w={114} className="ml-[9px]">32 (0.31% visible)</F></div>
          <div className="flex h-6 items-center"><F w={48} className="font-bold text-[#3c3c3c]">Edges:</F><F w={122} className="ml-[11px]">374 (0.21% visible)</F></div>
          <div className="flex h-6 items-center"><F w={123}>Undirected Graph</F></div>
        </div>
      </div>
      <div className="mt-[6px] flex h-[837px] flex-col border border-t-0 border-[#aca9a2]">
        <Header>
          <Tab w="w-[70px]" tw={43}>Filters</Tab>
          <div className="-mb-[2px] flex h-[22px] w-[90px] items-center border-r border-[#c4c2bd] pb-[2px] pl-[7px]"><F w={62}>Statistics</F></div>
          <MinBox />
        </Header>
        <div className="flex h-[31px] shrink-0 items-center border-b border-[#d3d1cd] pl-[7px]">
          <F w={39}>Reset</F><V className="ml-[12px]" />
          <svg className="ml-[11px] h-4 w-4" viewBox="0 0 16 16"><rect x=".5" y=".5" width="13" height="14" fill="#bfe6f7" stroke="#5f9bb5" /><path d="M2 3h10M2 6h10M2 9h8M2 12h7M5 2v11M8 2v11" stroke="#6cc4ea" /><path d="M9 8h3V6l4 4-4 4v-2H9z" fill="#fff" stroke="#777" strokeWidth=".8" /></svg>
          <svg className="ml-[12px] h-4 w-4" viewBox="0 0 16 16"><rect x=".5" y="1.500" width="13" height="12" rx="1" fill="#ececec" stroke="#888" /><path d="M1 2h12v3H1z" fill="#bbb" /><path d="M9 8h3V6l4 4-4 4v-2H9z" fill="#fff" stroke="#777" strokeWidth=".8" /></svg>
          <div className="ml-[13px] flex items-center font-['Liberation_Serif'] text-[12px] font-bold text-[#222]">A<svg className="h-[8px] w-[6px]" viewBox="0 0 6 8"><path d="M0 3h2.500V1L5.500 4l-3 3V5H0z" fill="#fff" stroke="#666" strokeWidth=".8" /></svg></div>
        </div>
        <div className="flex h-[260px] shrink-0 bg-white">
          <div className="flex grow flex-col overflow-hidden">{library.map((r) => <FilterRow key={r.t} r={r} />)}</div>
          <div className="flex w-[13px] flex-col rounded-full border border-[#b5b2ac] bg-[#d6d5d2]">
            <div className="flex h-[12px] items-center justify-center rounded-t-full bg-[#f2f1ef] text-[5px]">▲</div>
            <div className="mt-[31px] flex h-[139px] flex-col items-center justify-center gap-[2px] rounded-full border border-[#a5a29c] bg-[#f7f7f6]"><i className="block h-px w-1 bg-[#999]" /><i className="block h-px w-1 bg-[#999]" /><i className="block h-px w-1 bg-[#999]" /></div>
            <div className="mt-auto flex h-[12px] items-center justify-center rounded-b-full bg-[#f2f1ef] text-[5px]">▼</div>
          </div>
        </div>
        <div className="flex h-[3px] shrink-0 items-center justify-center gap-[2px]"><i className="block h-[3px] w-px bg-[#bbb]" /><i className="block h-[3px] w-px bg-[#bbb]" /><i className="block h-[3px] w-px bg-[#bbb]" /></div>
        <div className="h-[376px] shrink-0 bg-white">
          <div className="flex h-[19px] items-center pl-[6px] text-[#3c3c3c]"><Funnel className="h-4 w-[13px]" /><F w={55} className="ml-[10px]">Queries</F></div>
          <FilterRow r={{ t: "Degree Range", w: 98, lvl: 0 }} funnel />
        </div>
        <fieldset className="mx-[7px] mt-[3px] h-[96px] shrink-0 border border-[#d3d1cd] pl-[8px]">
          <legend className="ml-[-4px] px-[2px] leading-5 text-[#3c3c3c]"><F w={159}>Degree Range Settings</F></legend>
          <div className="mt-px flex h-5 items-center">
            <i className="ml-[2px] block h-[2px] w-[249px] bg-black" />
            <i className="block h-5 w-[11px] border-r border-b border-black bg-[#f2f1ef] shadow-[inset_1px_1px_0_#fff,inset_-1px_-1px_0_#777]" />
            <i className="block h-[4px] w-[290px] border-t-2 border-[#1e9ab8] bg-[#6fdcf0]" />
            <i className="block h-5 w-[11px] border-r border-b border-black bg-[#f2f1ef] shadow-[inset_1px_1px_0_#fff,inset_-1px_-1px_0_#777]" />
          </div>
          <div className="mt-[4px] flex gap-[2px] text-[#c2c0bc]">
            <div className="flex h-[15px] w-[278px] items-center rounded-[3px] border border-[#cfcdc9] bg-[#eae9e7]"><F w={31}>1000</F></div>
            <div className="flex h-[15px] w-[278px] items-center justify-end rounded-[3px] border border-[#cfcdc9] bg-[#eae9e7]"><F w={31}>2189</F></div>
          </div>
          <svg className="mt-[9px] ml-[513px] h-[22px] w-[52px]" viewBox="0 0 52 22"><path d="M0 21.500h30l8-1 6-2 4-4 2-4v11.500H0z" fill="#cfd3d3" /><path d="M51 0v22" stroke="#3c4347" /><path d="M50 9v13" stroke="#777" /></svg>
        </fieldset>
        <div className="flex grow items-center pr-[5px] pb-px pl-[6px]">
          <div className="h-[37px] grow border-t border-b border-t-white border-b-[#d9d7d3]" />
          <div className={btn + " ml-[6px] h-[31px] w-[83px] pl-[14px]"}>
            <i className="block h-[11px] w-[11px] border border-[#9e2318] bg-linear-to-br from-[#f08b7c] to-[#d43b28]" />
            <F w={32} className="ml-[7px]">Stop</F>
          </div>
        </div>
      </div>
    </div>
  );
}

const modeBtn = "flex h-[21px] w-[160px] items-center border border-[#6f7488] pl-[6px] ";
function Gephi() {
  return (
    <div className="h-[1080px] w-[2560px] overflow-hidden bg-[#f2f1ef]">
      <div className="flex h-6 items-center justify-between bg-linear-to-b from-[#5a584f] to-[#43413b] pl-[6px]">
        <F w={417} className="text-[15px] font-bold text-[#dfdbd2]">Gephi 0.9.1 - hero-social-network_AriasBarraIgnacio.gephi</F>
        <Indicators />
      </div>
      <div className="flex">
        <Launcher />
        <div className="flex h-[1056px] w-[2495px] flex-col">
          <div className="flex h-[21px] shrink-0 items-center bg-[#3c3b37] pl-[5px] text-[#dfdbd2]">
            <F w={24}><u>F</u>ile</F><F w={77} className="ml-[9px]">Workspace</F><F w={38} className="ml-[8px]"><u>T</u>ools</F>
            <F w={56} className="ml-[9px]"><u>W</u>indow</F><F w={50} className="ml-[9px]">Plugins</F><F w={33} className="ml-[9px]"><u>H</u>elp</F>
          </div>
          <div className="flex h-[24px] shrink-0 items-end gap-[3px] bg-white pl-[3px] text-[#4c4c4c]">
            <div className={modeBtn + "border-[#2f4a66] bg-linear-to-b from-[#d3e0ea] to-[#a3bbcf]"}>
              <svg className="h-4 w-4" viewBox="0 0 16 16"><circle cx="8" cy="8" r="7.500" fill="#2f7fd0" /><path d="M2 4q4-4 7-2l-2 4-3 1-1 3q-3-3-1-6zM9 8l4-2 2 3-3 5-3-1z" fill="#55b04a" /></svg>
              <F w={65} className="ml-[25px]">Overview</F>
            </div>
            <div className={modeBtn + "bg-linear-to-b from-white to-[#dcdde2]"}>
              <svg className="h-4 w-4" viewBox="0 0 16 16"><rect x=".5" y=".5" width="15" height="15" fill="#e4f4fb" stroke="#7aa" /><path d="M2 5h12M2 8h12M2 11h12M6 2v12M10 2v12" stroke="#55bde6" /><path d="M2 2h12v2H2z" fill="#55bde6" /></svg>
              <F w={112} className="ml-px">Data Laboratory</F>
            </div>
            <div className={modeBtn + "bg-linear-to-b from-white to-[#dcdde2]"}>
              <svg className="h-4 w-4" viewBox="0 0 16 16"><rect x=".5" y="1" width="15" height="11" fill="#ddd" stroke="#888" /><rect x="2" y="2.500" width="12" height="8" fill="#2f86d0" /><path d="M6 12h4v2h2v1.500H4V14h2z" fill="#999" /></svg>
              <F w={56} className="ml-[29px]">Preview</F>
            </div>
            <svg className="mr-[14px] ml-auto h-[24px] w-[136px]" viewBox="0 0 136 24" fill="none">
              <path d="M0 0Q8 12 24 13T54 0" stroke="#060a0a" strokeWidth="2" />
              <path d="M33 0h9q-4 12 3 24H38q-8-14-5-24z" fill="#060a0a" />
              <path d="M8 24q10-6 22 0z" fill="#060a0a" />
              <path d="M102 1q-14 4-36 23h4l14-7-2 7h11q1-12 9-23z" fill="#060a0a" />
              <path d="M98 24Q102 0 118 0t16 24h-10q1-17-6-17-8 0-10 17z" fill="#060a0a" />
            </svg>
          </div>
          <div className="flex h-[31px] shrink-0 items-center justify-between border-b-2 border-[#aca9a2] pr-[5px]">
            <div className="mt-[2px] ml-px flex h-[27px] w-[131px] items-center rounded-t-[3px] border border-b-0 border-[#aca9a2] pb-[2px] pl-[2px]">
              <i className="mt-1 block h-[12px] w-[16px] border border-[#ccc] border-t-[#999] bg-white" />
              <F w={88} className="ml-[4px]">Workspace 0</F><X className="ml-[7px] text-[#222]" />
            </div>
            <ArrowBtns />
          </div>
          <div className="flex pt-[6px] pl-[4px]">
            <div className="flex flex-col"><AppearancePanel /><LayoutPanel /></div>
            <GraphPanel />
            <RightColumn />
          </div>
          <div className="mt-auto flex h-[30px] items-center justify-end pr-[7px]">
            <svg className="h-[17px] w-[15px]" viewBox="0 0 15 17"><circle cx="7.500" cy="8" r="7" fill="#8cbbd8" stroke="#4c7390" /><path d="M6 1q6-1 7 5l-5 4z" fill="#3fa53a" /><path d="M2 8h7v3h3V8l2 1v5l-3 1H6l2 2-6-3V9z" fill="#f0d68a" stroke="#8b6a2c" strokeWidth=".8" /></svg>
            <F w={8} className="ml-[5px]">2</F>
          </div>
        </div>
      </div>
    </div>
  );
}

/* ---------------------------------------------------------------- browser */

function ChromeTab({ icon, children, audio, active, cls }: { icon: React.ReactNode; children: React.ReactNode; audio?: boolean; active?: boolean; cls: string }) {
  return (
    <div className={"relative -mr-[14px] flex h-[29px] items-center " + cls}>
      <svg className="absolute inset-0 h-full w-full" viewBox="0 0 205 29" preserveAspectRatio="none"><path d="M0 29L11 3q1-2 3-2h176q2 0 3 2l12 26z" fill={active ? "#f2f1f0" : "#d0cecd"} stroke={active ? "none" : "#8d8b88"} strokeWidth=".8" /></svg>
      <div className="relative ml-[16px] flex w-[173px] items-center pb-px">
        <span className="flex h-4 w-4 shrink-0 items-center justify-center">{icon}</span>
        <span className={"ml-[7px] shrink-0 " + (audio ? "w-[115px] " : "w-[132px] ") + (active ? "text-[#3c3c3c]" : "text-[#5c5b59]")}>{children}</span>
        {audio && <svg className="ml-[8px] h-[9px] w-[10px]" viewBox="0 0 10 9"><path d="M0 3h2l3-3v9L2 6H0z" fill="#777" /><path d="M6.500 2v5M8.500 1v7" stroke="#777" /></svg>}
        <svg className="ml-auto h-[9px] w-[9px]" viewBox="0 0 9 9"><path d="M1 1l7 7M8 1L1 8" stroke="#7c7a78" strokeWidth="1.600" /></svg>
      </div>
    </div>
  );
}

const ic = "flex h-4 w-4 shrink-0 items-center justify-center overflow-hidden";
const Ever = () => <div className={ic + " bg-[#2ed35c] text-[#3c4a3e]"}><FaEvernote className="h-3 w-3" /></div>;
const Whats = () => <div className={ic + " rounded-full bg-[#0fbf45] text-[10px] font-bold text-white"}>1</div>;
const Tube = () => <div className={ic + " h-[13px] rounded-[3px] bg-[#e02020]"}><svg className="h-[6px] w-[6px]" viewBox="0 0 6 6"><path d="M0 0v6l6-3z" fill="#fff" /></svg></div>;
const Uni = () => (
  <div className="flex h-4 w-4 shrink-0 flex-col items-center justify-center">
    <svg className="h-[5px] w-[9px]" viewBox="0 0 9 5"><path d="M0 1l2 1L3 0l1.500 2L6 0l1 2 2-1-1 4H1z" fill="#d6203c" /></svg>
    <span className="-mt-[3px] text-[15px] leading-[14px] font-bold text-[#222]">ü</span>
  </div>
);

function Bookmarks() {
  return (
    <div className="flex h-[30px] items-center gap-[12px] pl-[10px] text-[15px] text-[#333]">
      <Ever />
      <Whats />
      <div className={ic + " border-t-[3px] border-[#c8c8c8] bg-[#2f62d0] text-[10px] font-bold text-white"}>25</div>
      <svg className={ic} viewBox="0 0 16 16"><path d="M0 7l16-6-3 7 3 6z" fill="#2fc06a" /><path d="M13 8L0 7l16 7z" fill="#58d68a" /></svg>
      <svg className={ic} viewBox="0 0 16 16" fill="none" stroke="#2d3a60" strokeWidth="1.300"><circle cx="8" cy="7" r="6.300" /><path d="M4.500 8q3.500 4 7 0M9 13l3 2.500" /></svg>
      <div className={ic + " bg-[#4a2f4a] text-[11px] text-[#c98bb5]"}>#</div>
      <FaTwitter className={ic + " text-[#55acee]"} />
      <div className={ic + " items-end bg-[#475fa5] text-white"}><FaFacebookF className="h-[13px] w-[13px]" /></div>
      <div className={ic + " bg-[#0a74b2] text-[13px] font-bold text-white"}>in</div>
      <div className={ic + " rounded-[3px] bg-[#0a88cc] text-[11px] font-bold text-white italic"}>ij</div>
      <svg className={ic} viewBox="0 0 16 16" fill="none" stroke="#2468e8"><path d="M3 5q2-5 9-3" strokeWidth="1.500" /><circle cx="8" cy="5.500" r="1.800" fill="#2468e8" /><path d="M8 8v8" strokeWidth="3" /></svg>
      <div className="flex items-center gap-[5px]"><div className={ic + " bg-[#3d5a86] font-['Liberation_Serif'] text-[15px] font-bold text-white italic"}>L</div><F w={51}>Linguee</F></div>
      <div className="flex items-center gap-[5px]"><svg className={ic} viewBox="0 0 16 16"><path d="M8 0l7 3v10l-7 3-7-3V3z" fill="#f2a521" /><path d="M1 3l7 2 7-2M8 5v10" stroke="#fbd58a" fill="none" /></svg><F w={29}>AWS</F></div>
      <svg className={ic} viewBox="0 0 16 16"><path d="M6 5h10v11H9z" fill="#d5d8dc" /><path d="M0 0h8l4 12H0z" fill="#4a86ee" /><path d="M6.500 4.500a2.200 2.200 0 1 0 .4 2H5" stroke="#fff" fill="none" /><path d="M10.500 9h4M12.500 8v1q0 3-2 4M11 10l3 4" stroke="#888" fill="none" strokeWidth=".8" /></svg>
      <div className="flex items-center gap-[5px]"><Uni /><F w={74}>Aula Virtual</F></div>
      <div className="flex items-center gap-[5px]"><Uni /><F w={39}>Portal</F></div>
      <svg className={ic} viewBox="0 0 16 16"><circle cx="8" cy="9.500" r="5" fill="#f6f0d8" stroke="#c8a44a" strokeWidth="1.300" /><path d="M4.500 4q3.500-6 7 0z" fill="#c9a24a" /><path d="M5 7l6 5" stroke="#3a63a8" strokeWidth="1.500" /></svg>
      <div className={ic + " bg-white font-['Liberation_Serif'] text-[16px] font-bold text-[#d01414]"}>as</div>
      <div className={ic + " font-['Liberation_Serif'] text-[18px] font-black text-[#c80d0d] [-webkit-text-stroke:1.500px_#c80d0d]"}>M</div>
      <div className={ic + " rounded-[3px] bg-[#e0201e]"}><div className="flex h-[13px] w-[13px] items-center justify-center rounded-full border-[1.500px] border-white text-[10px] font-bold text-white">S</div></div>
      <div className={ic + " bg-[#222] text-[6px] font-bold text-[#d8c24a]"}>MD</div>
      <div className={ic + " rounded-full bg-[#169a48] text-[7px] font-bold text-white"}>MR</div>
      <div className="flex h-4 w-4 shrink-0 flex-col items-center font-['DejaVu_Sans'] text-[8px] leading-[8px] font-bold text-[#4a5bb0]"><F w={11}>YT</F><F w={14}>mp3</F></div>
      <Tube />
      <svg className={ic} viewBox="0 0 16 16"><path d="M0 0h16v16H0z" fill="#28bfd6" /><path d="M2 13q2-5 12-2M3 9q4-4 9-2M6 5q3-2 6 0" stroke="#fff" fill="none" strokeWidth="1.300" /></svg>
      <FaDropbox className={ic + " text-[#0b7ee6]"} />
      <svg className={ic} viewBox="0 0 16 16"><path d="M1 11q-1-3 2-4 1-4 5-3 3 0 3 2 4 0 5 3 1 4-2 4H3q-2 0-2-2z" fill="#0e4aa8" /><path d="M5 13q-1-5 4-5" stroke="#fff" fill="none" /></svg>
      <svg className={ic} viewBox="0 0 16 16"><path d="M5.500 1h5L16 10.500h-5z" fill="#ffcf48" /><path d="M5.500 1L8 5.500 2.700 15 0 10.500z" fill="#1aa261" /><path d="M5.500 10.500H16L13.300 15H2.700z" fill="#4787f0" /></svg>
      <svg className={ic} viewBox="0 0 16 16"><path d="M2 0h12v4h-4v12H6V4H2z" fill="#e6261f" /></svg>
      <div className="flex items-center gap-[5px]"><FaFolder className={ic + " text-[#7c7a78]"} /><F w={52}>Ericsson</F></div>
      <div className="flex items-center gap-[5px]"><FaFolder className={ic + " text-[#7c7a78]"} /><F w={44}>Master</F></div>
      <span className="mr-[22px] ml-auto text-[#555]">»</span>
    </div>
  );
}

type PicRow = { t: string; w: number; lvl: number; box?: "+" | "-" | "" };
const picRows: PicRow[] = [
  { t: "Attributes", w: 48, lvl: 0, box: "-" }, { t: "Equal", w: 26, lvl: 1, box: "+" }, { t: "Inter Edges", w: 56, lvl: 1, box: "+" }, { t: "Intra Edges", w: 56, lvl: 1, box: "+" },
  { t: "Non-null", w: 39, lvl: 1, box: "+" }, { t: "Partition", w: 40, lvl: 1, box: "+" }, { t: "Partition Count", w: 73, lvl: 1, box: "+" }, { t: "Range", w: 31, lvl: 1, box: "+" },
  { t: "Dynamic", w: 41, lvl: 0, box: "+" }, { t: "Edges", w: 30, lvl: 0, box: "-" }, { t: "Edge Weight", w: 62, lvl: 1, box: "" }, { t: "Self-Loop", w: 50, lvl: 1, box: "" },
];

function PdfPicture() {
  return (
    <div className="flex w-[199px] flex-col border-t border-[#888] bg-white font-['DejaVu_Sans'] text-[11px] text-[#222]">
      <div className="h-[5px] shrink-0 bg-[#ececec]" />
      <div className="flex h-[21px] shrink-0 items-center border-t border-b border-[#8a929c] bg-linear-to-b from-[#f4f4f4] to-[#cfcfcf] font-['Liberation_Sans'] font-bold">
        <div className="flex h-full w-[60px] items-center gap-[6px] border-r border-l border-[#5b93bd] bg-linear-to-b from-[#d5ecf9] to-white pl-[4px]"><F w={35}>Filters</F><X className="h-[8px] w-[8px] text-[#666]" /></div>
        <div className="flex h-full w-[77px] items-center border-r border-[#888] pl-[5px]"><F w={50}>Statistics</F></div>
      </div>
      <div className="flex h-[24px] shrink-0 items-center border-b border-[#8da3bb] bg-[#efefef] pl-[3px]">
        <F w={29}>Reset</F><i className="ml-[6px] block h-[18px] w-px bg-[#999]" />
        <svg className="ml-[6px] h-[15px] w-[16px]" viewBox="0 0 16 16"><rect x=".5" y=".5" width="13" height="14" fill="#bfe6f7" stroke="#5f9bb5" /><path d="M2 4h10M2 7h10M2 10h8M5 2v11" stroke="#5cc" /><path d="M9 8h3V6l4 4-4 4v-2H9z" fill="#ddd" stroke="#888" /></svg>
        <svg className="ml-[7px] h-[14px] w-[16px]" viewBox="0 0 16 16"><rect x=".5" y="1.500" width="13" height="12" fill="#eee" stroke="#999" /><path d="M9 8h3V6l4 4-4 4v-2H9z" fill="#ddd" stroke="#888" /></svg>
        <span className="ml-[9px] font-bold text-[#333]">A</span>
        <svg className="h-[7px] w-[6px]" viewBox="0 0 6 7"><path d="M0 2h3l2 1.500L3 5.500H0" fill="none" stroke="#888" /></svg>
      </div>
      <div className="flex h-[18px] shrink-0 items-center pl-[2px]"><svg className="h-[13px] w-[16px]" viewBox="0 0 16 13"><path d="M0 1h6l1 1h9v11H0z" fill="#ecc665" /><path d="M0 4h16" stroke="#f9e3a4" strokeWidth="2" /></svg><F w={33} className="ml-[7px]">Library</F></div>
      {picRows.map((r) => (
        <div key={r.t} className="flex h-[18.100px] shrink-0 items-center">
          <i className="ml-[9px] block h-full w-px shrink-0 border-l border-dotted border-[#999]" />
          {r.lvl === 1 && <i className="ml-[18px] block h-full w-px shrink-0 border-l border-dotted border-[#999]" />}
          <span className={"-ml-[5px] flex h-[9px] w-[9px] shrink-0 items-center justify-center text-[9px] leading-none " + (r.box ? "border border-[#8890a8] bg-white" : "")}>{r.box === "-" ? "−" : r.box}</span>
          <i className="block w-[6px] border-t border-dotted border-[#999]" />
          <span className="ml-[4px] flex w-[20px]">{r.box ? <Folder /> : <Funnel />}</span>
          <F w={r.w}>{r.t}</F>
        </div>
      ))}
    </div>
  );
}

function Item({ n, lines, cls }: { n: string; lines: [string, number][]; cls: string }) {
  return (
    <div className={"flex " + cls}>
      <F w={20} className="mr-[33px]">{n}</F>
      <div className="flex flex-col">{lines.map(([t, w]) => <F key={t} w={w}>{t}</F>)}</div>
    </div>
  );
}

function Browser() {
  return (
    <div className="ml-[664px] flex h-[720px] w-[1280px] flex-col bg-[#525659]">
      <div className="flex h-6 shrink-0 justify-end bg-linear-to-b from-[#5a584f] to-[#43413b]"><Indicators /></div>
      <div className="flex h-[29px] shrink-0 bg-[#3c3b37] pl-[6px] text-[15px]">
        <ChromeTab cls="w-[205px]" icon={<Ever />}><F w={132} className="[mask-image:linear-gradient(to_right,#000_105px,transparent_130px)]">ToDO | Evernote Web</F></ChromeTab>
        <ChromeTab cls="w-[207px]" icon={<Whats />}><F w={86}>(1) WhatsApp</F></ChromeTab>
        <ChromeTab cls="w-[207px]" icon={<Tube />} audio><F w={118} className="[mask-image:linear-gradient(to_right,#000_104px,transparent_119px)]">Summer Paradise 2</F></ChromeTab>
        <ChromeTab cls="w-[207px]" active icon={<svg className="h-4 w-3" viewBox="0 0 12 16"><path d="M1 1h6l4 4v10H1zM7 1v4h4" fill="#fff" stroke="#666" strokeWidth="1.300" /></svg>}><F w={132} className="[mask-image:linear-gradient(to_right,#000_110px,transparent_132px)]">gephi_advanced func</F></ChromeTab>
        <svg className="mt-[8px] ml-[13px] h-[15px] w-[33px]" viewBox="0 0 33 15"><path d="M0 0h25q2 0 3 2l5 13H9q-2 0-3-2z" fill="#d0cecd" /></svg>
        <div className="mt-px mr-[6px] ml-auto flex h-[18px] w-[54px] items-center justify-center rounded-b-[4px] border border-t-0 border-[#6a6862] text-[13px] text-white"><F w={37}>Nacho</F></div>
      </div>
      <div className="flex h-[62px] shrink-0 flex-col border-b-2 border-[#b4b3b1] bg-[#f2f1f0]">
        <div className="flex h-[31px] items-center pt-[5px]">
          <svg className="ml-[11px] h-[14px] w-[98px]" viewBox="0 0 98 14" fill="none" stroke="#6c6a68" strokeWidth="1.900">
            <path d="M14 7H1.500M7.500 1l-6 6 6 6" /><path d="M28 7h13M35 1l6 6-6 6" stroke="#ccc" />
            <path d="M67 4a6 6 0 1 0 1 5" /><path d="M70 0v6h-6z" fill="#6c6a68" stroke="none" />
            <path d="M85 7.500L92 1l6 6.500M87 6v7.500h9V6" transform="translate(-1.500 0)" />
          </svg>
          <div className="ml-[12px] flex h-[27px] w-[1026px] items-center rounded-[3px] border border-[#a8a6a4] bg-white pr-[6px] pl-[6px] text-[15px]">
            <svg className="h-[14px] w-[14px]" viewBox="0 0 14 14" fill="none" stroke="#666" strokeWidth="1.300"><circle cx="7" cy="7" r="6.200" /><path d="M7 6v4.500M7 3.300v1.500" strokeWidth="1.700" /></svg>
            <F w={165} className="ml-[7px] text-[#222]">www.clementlevallois.net</F>
            <F w={339} className="text-[#888]">/gephi/tuto/en/gephi_advanced%20functions_en.pdf</F>
            <svg className="ml-auto h-[15px] w-[15px]" viewBox="0 0 15 15"><path d="M7.500 1l2 4.500 4.500.5-3.500 3 1 5-4-2.500-4 2.500 1-5L1 6l4.500-.5z" fill="none" stroke="#666" strokeWidth="1.200" /></svg>
          </div>
          <svg className="ml-[11px] h-[13px] w-4" viewBox="0 0 16 13"><path d="M0 0h16v13H0z" fill="#fff" /><path d="M1.500 13V2L8 8l6.500-6v11" stroke="#d52b2b" strokeWidth="3" fill="none" /></svg>
          <div className="relative ml-[16px] h-[22px] w-[21px]"><i className="mt-[2px] block h-[15px] w-[15px] rounded-full bg-[#ff6a33]" /><svg className="absolute top-[4px] left-[3px] h-[10px] w-[10px]" viewBox="0 0 10 10"><path d="M9 1L4 6 2 4M4 6l-2 3" stroke="#fff" strokeWidth="1.500" fill="none" /></svg><span className="absolute top-[13px] left-[10px] flex h-[12px] w-[11px] items-center justify-center bg-[#555] text-[9px] text-white">1</span></div>
          <div className="relative ml-[11px] h-[22px] w-[22px]"><i className="mt-[2px] block h-[15px] w-[16px] border-t-[3px] border-[#ccc] bg-[#3c6fd8]" /><span className="absolute top-[13px] left-[8px] flex h-[12px] w-[14px] items-center justify-center bg-[#ff7038] text-[9px] text-white">1d</span></div>
          <div className="ml-[17px] flex w-[4px] flex-col gap-[3px]"><i className="block h-[3px] w-[3px] rounded-full bg-[#666]" /><i className="block h-[3px] w-[3px] rounded-full bg-[#666]" /><i className="block h-[3px] w-[3px] rounded-full bg-[#666]" /></div>
        </div>
        <Bookmarks />
      </div>
      <div className="flex h-[605px] shrink-0 overflow-hidden">
        <div className="flex grow flex-col pl-[152px]">
          <div className="flex h-[12px] w-[960px] shrink-0 justify-end bg-white pr-[139px] shadow-[0_0_5px_3px_#3d4043]"><i className="mr-[8px] block h-px w-[4px] bg-[#777]" /><i className="block h-[2px] w-[2px] bg-black" /></div>
          <div className="relative mt-[14px] h-[579px] w-[960px] bg-white shadow-[0_0_5px_3px_#3d4043]">
            <div className="flex pl-[58px] text-black">
              <div className="w-[646px] shrink-0 pt-[59px] font-['Lato'] text-[22.500px] leading-[25px] [font-variant-ligatures:none]">
                <F w={485} className="text-[53px] leading-[61px]">1. Basic use of filters</F>
                <Item n="1." cls="mt-[51px]" lines={[["Select a filter in the « catalogue »", 360]]} />
                <div className="mt-[5px] ml-[95px] flex text-[20.500px] italic"><F w={274}>(Example: « degree range »)</F></div>
                <Item n="2." cls="mt-[35px]" lines={[["Drag and drop the filter in the lower", 390], ["part of the filter panel", 239]]} />
                <Item n="3." cls="mt-[40px]" lines={[["Open its parameters, play with", 331], ["values", 67]]} />
                <Item n="4." cls="mt-[39px]" lines={[["Click on « Filter » to actually filter", 361]]} />
                <Item n="5." cls="mt-[40px]" lines={[["Options are made available to save", 377], ["/ export / change labels of the", 326], ["filtered graph.", 153]]} />
              </div>
              <div className="h-[579px] overflow-hidden pt-[304px]"><PdfPicture /></div>
            </div>
            <svg className="absolute top-[340px] left-[440px] h-[230px] w-[340px]" viewBox="0 0 340 230" fill="none" stroke="#4a7ebb">
              <path d="M17.500 211L315 15" strokeWidth="5.500" /><path d="M294 17.500l23-3-13 20" strokeWidth="5.500" strokeLinecap="round" />
            </svg>
          </div>
        </div>
        <div className="flex w-[15px] flex-col items-center bg-[#f1f1f1] py-[6px]">
          <svg className="h-[4px] w-[7px] shrink-0" viewBox="0 0 7 4"><path d="M0 4l3.500-4L7 4z" fill="#505050" /></svg>
          <div className="mt-[126px] h-[30px] w-[11px] shrink-0 bg-[#c1c1c1]" />
          <svg className="mt-auto h-[4px] w-[7px]" viewBox="0 0 7 4"><path d="M0 0h7L3.500 4z" fill="#505050" /></svg>
        </div>
      </div>
    </div>
  );
}

export default function App() {
  return (
    <div className="h-[1800px] w-[2560px] overflow-hidden bg-black font-['Noto_Sans',sans-serif] text-[15px] leading-none text-[#545454]">
      <Gephi />
      <Browser />
    </div>
  );
}
